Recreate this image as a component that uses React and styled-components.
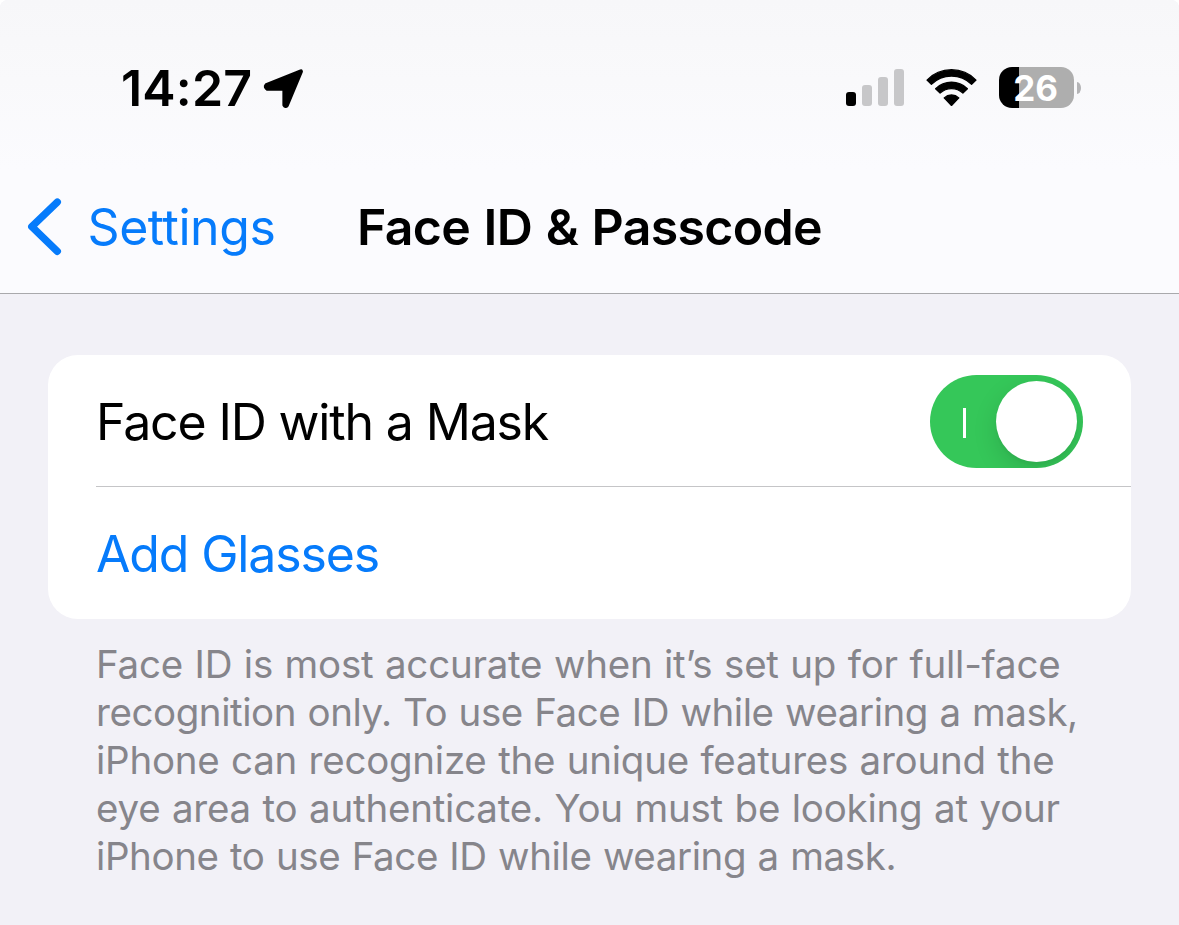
import React, { useState } from "react"
import styled, { createGlobalStyle } from "styled-components";

const GlobalStyle = createGlobalStyle`
  * {
    box-sizing: border-box;
  }

  body {
    margin: 0;
    background: #ffffff;
    font-family: Inter, "Liberation Sans", sans-serif;
  }

  button {
    border: 0;
    padding: 0;
    background: none;
    font-family: inherit;
    cursor: pointer;
  }
`

const Page = styled.div`
  width: 1179px;
  height: 925px;
  overflow: hidden;
  border-radius: 8px 8px 0 0;
  background: #f2f1f7;
`

const Header = styled.header`
  height: 294px;
  border-bottom: 1px solid #a9a9ac;
  background: linear-gradient(#f7f7f9 0, #f9f9fb 80px, #fbfbfe 170px, #fbfbfe 100%);
`

const StatusBar = styled.div`
  display: flex;
  align-items: center;
  justify-content: space-between;
  height: 175px;
  padding: 0 98px 0 121px;
`

const StatusGroup = styled.div`
  display: flex;
  align-items: center;
  gap: ${({ $gap }) => $gap}px;
`

const Time = styled.span`
  width: 133px;
  padding-top: 2px;
  font-size: 50px;
  line-height: 59px;
  font-weight: 600;
  letter-spacing: ${({ $spacing }) => $spacing}px;
  white-space: nowrap;
`

const BatteryWrap = styled.div`
  display: flex;
  align-items: center;
  gap: 3px;
  height: 41px;
`

const BatteryBody = styled.div`
  display: flex;
  align-items: center;
  justify-content: center;
  width: 75px;
  height: 41px;
  padding: 2px 2px 0 0;
  border-radius: 13px;
  background: linear-gradient(90deg, #000 20px, #aeaeae 20px);
  color: #fff;
  font-size: 35px;
  line-height: 41px;
  font-weight: 650;
  letter-spacing: -0.2px;
`

const BatteryCap = styled.div`
  width: 4px;
  height: 12px;
  border-radius: 0 4px 4px 0 / 0 6px 6px 0;
  background: #b4b4b6;
`

const NavBar = styled.nav`
  display: flex;
  align-items: center;
  height: 104px;
  padding-left: 27px;
`

const BackButton = styled.button`
  display: flex;
  align-items: center;
  width: 330px;
  gap: 24.5px;
  color: #067bfb;
  font-size: 50px;
  line-height: 60px;
  letter-spacing: ${({ $spacing }) => $spacing}px;
`

const Title = styled.h1`
  margin: 0;
  font-size: 50px;
  line-height: 60px;
  font-weight: 600;
  letter-spacing: ${({ $spacing }) => $spacing}px;
  word-spacing: 1.5px;
  white-space: nowrap;
`

const Card = styled.section`
  margin: 61px 48px 0;
  border-radius: 30px;
  background: #fff;
`

const Row = styled.div`
  display: flex;
  align-items: center;
  justify-content: space-between;
  height: 132px;
  margin-left: 48px;
  padding: 2px 48px 0 0;
  border-bottom: ${({ $last }) => ($last ? "0" : "1px solid #c5c5c7")};
`

const Label = styled.span`
  color: ${({ $link }) => ($link ? "#067bfb" : "#000")};
  font-size: 50px;
  line-height: 60px;
  letter-spacing: ${({ $spacing }) => $spacing}px;
  white-space: nowrap;
`

const Switch = styled.button`
  display: flex;
  align-items: center;
  justify-content: space-between;
  flex-direction: ${({ $on }) => ($on ? "row" : "row-reverse")};
  width: 153px;
  height: 93px;
  padding: 0 6px 0 33px;
  border-radius: 47px;
  overflow: hidden;
  background: ${({ $on }) => ($on ? "#35c759" : "#e9e9eb")};
`

const SwitchMark = styled.span`
  width: 3px;
  height: 30px;
  margin-top: 3px;
  background: #fff;
`

const Knob = styled.span`
  width: 81px;
  height: 81px;
  border-radius: 50%;
  background: #fff;
  box-shadow: 0 9px 24px rgba(0, 0, 0, 0.13), 0 3px 3px rgba(0, 0, 0, 0.03);
`

const Footnote = styled.p`
  margin: 21px 0 0 96px;
  color: #86858b;
  font-size: 38.5px;
  line-height: 48px;
`

const Line = styled.span`
  display: block;
  white-space: nowrap;
  letter-spacing: ${({ $spacing }) => $spacing}px;
  word-spacing: 1px;
`

const lines = [
  { text: "Face ID is most accurate when it’s set up for full-face", spacing: -0.23 },
  { text: "recognition only. To use Face ID while wearing a mask,", spacing: -0.43 },
  { text: "iPhone can recognize the unique features around the", spacing: -0.25 },
  { text: "eye area to authenticate. You must be looking at your", spacing: -0.22 },
  { text: "iPhone to use Face ID while wearing a mask.", spacing: -0.4 },
]

const LocationIcon = () => (
  <svg width="42" height="42" viewBox="-1 -1 40 40">
    <path
      d="M3.2 16.4 L36 3.2 L22.6 35.4 Q21.4 37 20.4 35.2 L20.4 19.6 L4.2 19.6 Q1.8 18 3.2 16.4Z"
      fill="#000" stroke="#000" strokeWidth="4" strokeLinejoin="round"
    />
  </svg>
)

const SignalIcon = () => (
  <svg width="58" height="37" viewBox="0 0 58 37">
    <rect x="0" y="23" width="10" height="14" rx="3" fill="#000" />
    <rect x="16" y="16" width="10" height="21" rx="3" fill="#c7c7c9" />
    <rect x="32" y="8" width="10" height="29" rx="3" fill="#c7c7c9" />
    <rect x="48" y="0" width="10" height="37" rx="3" fill="#c7c7c9" />
  </svg>
)

const WifiIcon = () => (
  <svg width="51" height="37" viewBox="0 0.5 51 37" preserveAspectRatio="none">
    <g fill="#000" stroke="#000" strokeWidth="1.3" strokeLinejoin="round">
      <path d="M1 11.6 A34 34 0 0 1 50 11.6 L45.6 15.8 A28.6 28.6 0 0 0 5.4 15.8Z" />
      <path d="M9.6 20.2 A22.8 22.8 0 0 1 41.4 20.2 L36.9 24.6 A16.6 16.6 0 0 0 14.1 24.6Z" />
      <path d="M18.2 29.4 A10.6 10.6 0 0 1 32.8 29.4 L25.5 37Z" />
    </g>
  </svg>
)

const ChevronIcon = () => (
  <svg width="36" height="58" viewBox="0 0 36 58">
    <path d="M30.3 4.1 L4.8 28.7 L30.3 53.3" fill="none" stroke="#067bfb" strokeWidth="7.4" strokeLinecap="round" strokeLinejoin="round" />
  </svg>
)

export default () => {
  const [mask, setMask] = useState(true);

  return (
    <Page>
      <GlobalStyle />
      <Header>
        <StatusBar>
          <StatusGroup $gap={8}>
            <Time $spacing={0.2}>14:27</Time>
            <LocationIcon />
          </StatusGroup>
          <StatusGroup $gap={22}>
            <SignalIcon />
            <WifiIcon />
            <BatteryWrap>
              <BatteryBody>26</BatteryBody>
              <BatteryCap />
            </BatteryWrap>
          </StatusGroup>
        </StatusBar>
        <NavBar>
          <BackButton $spacing={-0.45}>
            <ChevronIcon />
            Settings
          </BackButton>
          <Title $spacing={-0.67}>Face ID &amp; Passcode</Title>
        </NavBar>
      </Header>
      <Card>
        <Row>
          <Label $spacing={-1.15}>Face ID with a Mask</Label>
          <Switch $on={mask} role="switch" aria-checked={mask} onClick={() => setMask(!mask)}>
            <SwitchMark />
            <Knob />
          </Switch>
        </Row>
        <Row $last>
          <Label $link $spacing={-1.15}>Add Glasses</Label>
        </Row>
      </Card>
      <Footnote>
        {lines.map((line) => (
          <Line key={line.text} $spacing={line.spacing}>{line.text}</Line>
        ))}
      </Footnote>
    </Page>
  )
}
